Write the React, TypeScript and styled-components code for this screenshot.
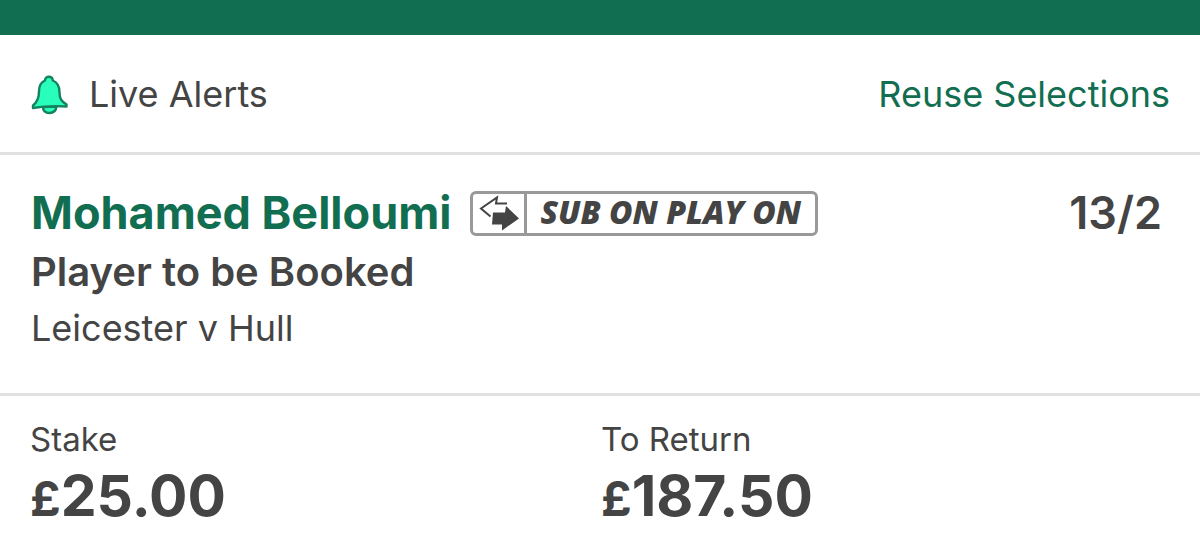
import React from "react";
import styled, { createGlobalStyle } from "styled-components";

const GREEN = "#126e51";
const INK = "#444444";
const LINE = "#e1e1e1";

const GlobalStyle = createGlobalStyle`
  *, *::before, *::after { box-sizing: border-box; }
  body {
    margin: 0;
    background: #ffffff;
    color: ${INK};
    font-family: Inter, "Liberation Sans", sans-serif;
  }
  h2, h3, p, dl, dt, dd { margin: 0; }
`;

const Slip = styled.main`
  width: 100%;
`;

const TopBar = styled.div`
  height: 35px;
  background: ${GREEN};
`;

const Toolbar = styled.header`
  display: flex;
  align-items: center;
  justify-content: space-between;
  padding: 36px 30px 34px;
  border-bottom: 3px solid ${LINE};
`;

const ToolbarButton = styled.button<{ $accent?: boolean }>`
  display: flex;
  align-items: center;
  gap: 21px;
  padding: 0;
  border: 0;
  background: none;
  color: ${(p) => (p.$accent ? GREEN : INK)};
  font: inherit;
  font-size: 36px;
  line-height: 47px;
  cursor: pointer;
`;

const BellIcon = styled.svg`
  width: 38px;
  height: 40px;
`;

const Selection = styled.section`
  display: flex;
  align-items: flex-start;
  justify-content: space-between;
  padding: 31px 38px 40px 31px;
  border-bottom: 3px solid ${LINE};
`;

const TitleRow = styled.div`
  display: flex;
  align-items: center;
  gap: 19px;
`;

const Player = styled.h2`
  color: ${GREEN};
  font-size: 45px;
  font-weight: 700;
  line-height: 54px;
`;

const Odds = styled.span`
  font-size: 45px;
  font-weight: 600;
  line-height: 54px;
`;

const Market = styled.h3`
  font-size: 40px;
  font-weight: 600;
  line-height: 64px;
`;

const Fixture = styled.p`
  font-size: 36px;
  line-height: 49px;
`;

const Badge = styled.span`
  display: flex;
  height: 45px;
  border: 3px solid #999999;
  border-radius: 6px;
`;

const BadgeIcon = styled.span`
  display: flex;
  align-items: center;
  justify-content: center;
  width: 54px;
  border-right: 3px solid #999999;
`;

const BadgeText = styled.span`
  padding: 0 14px 0 13px;
  font-family: "Open Sans", "Liberation Sans", sans-serif;
  font-size: 32px;
  font-style: italic;
  font-weight: 800;
  line-height: 36px;
  white-space: nowrap;
`;

const Totals = styled.dl`
  display: grid;
  grid-template-columns: 1fr 1fr;
  padding: 22px 28px 20px 30px;
`;

const Label = styled.dt`
  font-size: 33px;
  line-height: 42px;
`;

const Amount = styled.dd`
  font-size: 57px;
  font-weight: 700;
  line-height: 72px;
`;

const Currency = styled.span`
  font-size: 48px;
`;

const totals = [
  { label: "Stake", amount: "25.00" },
  { label: "To Return", amount: "187.50" },
];

export default function App() {
  return (
    <>
      <GlobalStyle />
      <Slip>
        <TopBar />
        <Toolbar>
          <ToolbarButton type="button">
            <BellIcon viewBox="0 0 38 40" aria-hidden="true">
              <g fill="#28ffbb" stroke="#14835f" strokeWidth="2.400" strokeLinejoin="round">
                <path d="M13 32C13 36 15.500 38 19.500 38C23.500 38 26 36 26.500 31.500Z" />
                <path d="M15 5.500C15 0.500 22.500 0.500 22.800 5.500C27.500 7.500 29.500 11.500 29.500 17C29.500 23.500 31 26 36.500 29.500V31.500C25 30.800 14 31 3 33V30.500C7.500 27 9 23 9 16.500C9 11 10 7.500 15 5.500Z" />
              </g>
            </BellIcon>
            Live Alerts
          </ToolbarButton>
          <ToolbarButton type="button" $accent>
            Reuse Selections
          </ToolbarButton>
        </Toolbar>
        <Selection>
          <div>
            <TitleRow>
              <Player>Mohamed Belloumi</Player>
              <Badge>
                <BadgeIcon>
                  <svg width="40" height="36" viewBox="0 0 40 36" aria-hidden="true">
                    <path d="M28 8.500H17L18 2.500L2 13.500L11.500 21.500" fill="none" stroke={INK} strokeWidth="2" />
                    <path d="M14 17.500H26L27 11L40 23.500L23 35.500V29.500H13Z" fill={INK} />
                  </svg>
                </BadgeIcon>
                <BadgeText>SUB ON PLAY ON</BadgeText>
              </Badge>
            </TitleRow>
            <Market>Player to be Booked</Market>
            <Fixture>Leicester v Hull</Fixture>
          </div>
          <Odds>13/2</Odds>
        </Selection>
        <Totals>
          {totals.map((t) => (
            <div key={t.label}>
              <Label>{t.label}</Label>
              <Amount>
                <Currency>£</Currency>
                {t.amount}
              </Amount>
            </div>
          ))}
        </Totals>
      </Slip>
    </>
  );
}
